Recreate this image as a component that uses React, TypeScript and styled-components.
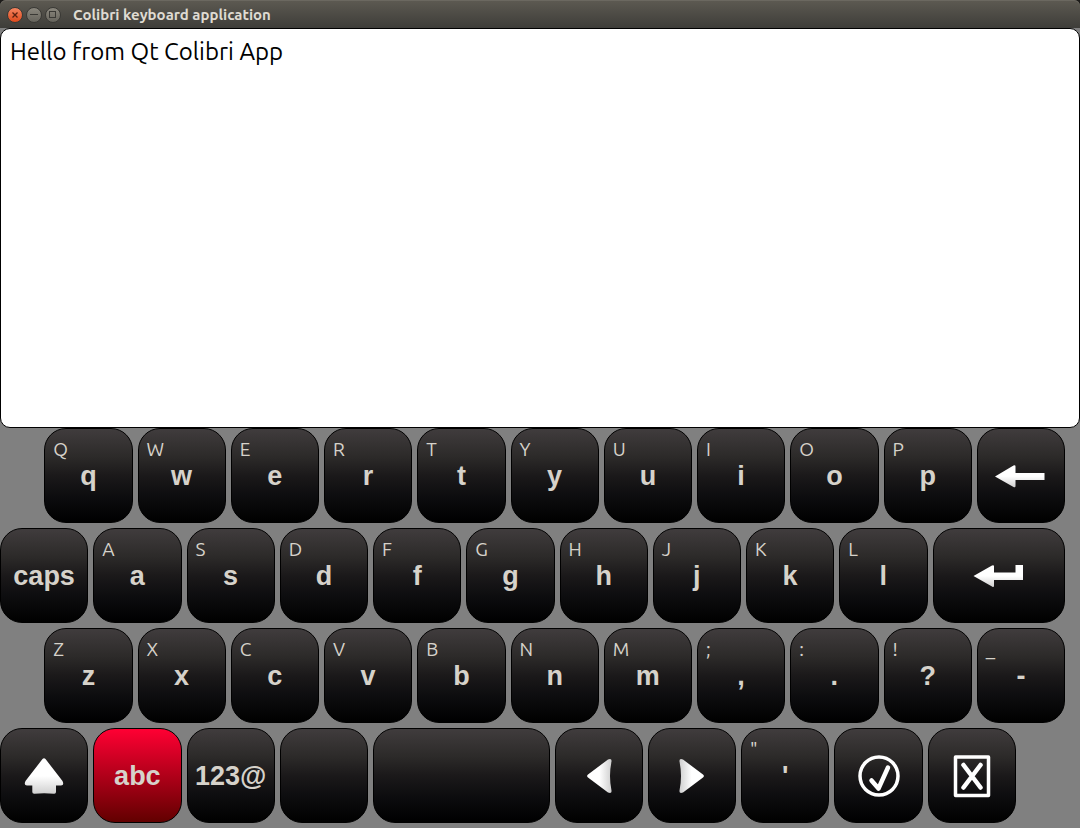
import React, { useRef, useState } from "react";
import styled, { createGlobalStyle, css } from "styled-components";

const GlobalStyle = createGlobalStyle`
  *, *::before, *::after { box-sizing: border-box; }
  body { margin: 0; background: #1c1b19; }
`;

const uiFont = `"Ubuntu", "Noto Sans", sans-serif`;
const keyFont = `"Liberation Sans", Arial, sans-serif`;

const Window = styled.main`
  display: flex;
  flex-direction: column;
  min-height: 100vh;
  font-family: ${uiFont};
`;

const TitleBar = styled.header`
  display: flex;
  align-items: center;
  gap: 3px;
  height: 28px;
  padding: 2px 7px 0;
  border-radius: 6px 6px 0 0;
  background: linear-gradient(#5d5a52, #3e3d39);
  box-shadow: inset 0 1px #6b6860;
`;

const WindowButton = styled.button<{ $close?: boolean }>`
  display: grid;
  place-items: center;
  width: 16px;
  height: 16px;
  padding: 0;
  border: 1px solid #3a3935;
  border-radius: 50%;
  background: ${(p) =>
    p.$close
      ? "linear-gradient(#f58560, #df4a1c)"
      : "linear-gradient(#8a877d, #66645c)"};
  color: ${(p) => (p.$close ? "#5a2110" : "#3a3935")};
`;

const Title = styled.h1`
  margin: 0 0 0 9px;
  color: #dfdbd2;
  font-size: 15px;
  line-height: 20px;
  font-weight: 700;
  white-space: nowrap;
`;

const Body = styled.div`
  display: grid;
  flex: 1;
  grid-template-rows: minmax(120px, 1fr) minmax(300px, 1fr);
  background: #808080;
`;

const Editor = styled.textarea`
  display: block;
  width: 100%;
  height: 100%;
  padding: 7px 9px;
  border: 1px solid #000;
  border-radius: 10px;
  outline: none;
  resize: none;
  background: #fff;
  color: #000;
  font-family: ${uiFont};
  font-size: 24px;
  line-height: 32px;
`;

const Keyboard = styled.section`
  display: flex;
  flex-direction: column;
  gap: 5px;
  padding: 0 15px 5px 0;
`;

const Row = styled.div<{ $staggered?: boolean }>`
  display: flex;
  flex: 1;
  gap: 5px;
  justify-content: ${(p) => (p.$staggered ? "flex-end" : "flex-start")};
`;

/* A full row holds eleven and a half key widths and ten gaps. */
const KeyButton = styled.button<{ $span: number; $active: boolean }>`
  display: grid;
  flex: none;
  width: calc((100% - 50px) * ${(p) => p.$span} / 11.5);
  padding: 0;
  border: 1px solid #000;
  border-radius: 22px;
  background: linear-gradient(#403c3d, #2c2a29 30%, #1b191a 50%, #0d0d0f 72%, #000);
  color: #d6d2ca;
  ${(p) =>
    p.$active &&
    css`
      background: linear-gradient(#ff0033, #620000);
    `}

  > * {
    grid-area: 1 / 1;
    place-self: center;
  }
`;

const KeyLabel = styled.span`
  font-family: ${keyFont};
  font-size: 27px;
  line-height: 32px;
  font-weight: 700;
`;

const KeyHint = styled.span`
  && {
    place-self: start;
  }
  padding: 8px;
  font-family: ${uiFont};
  font-size: 19px;
  line-height: 24px;
`;

const Icon = styled.svg`
  display: block;
  overflow: visible;
`;

const Shade = ({ id, horizontal, flip }: { id: string; horizontal?: boolean; flip?: boolean }) => (
  <defs>
    <linearGradient id={id} x1={flip ? 1 : 0} y1="0" x2={horizontal ? (flip ? 0 : 1) : 0} y2={horizontal ? 0 : 1}>
      <stop offset="0.5" stopColor="#fff" />
      <stop offset="1" stopColor="#cfcfcf" />
    </linearGradient>
  </defs>
);

const icons: Record<string, React.ReactNode> = {
  Backspace: (
    <Icon width="52" height="24" viewBox="0 0 52 24">
      <Shade id="back" />
      <path d="M0 12.500 L18.500 1.500 Q20.500 .5 20.500 2.500 V9 H49.500 V16 H20.500 V22 Q20.500 24 18.500 23 Z" fill="url(#back)" />
    </Icon>
  ),
  Enter: (
    <Icon width="52" height="24" viewBox="0 0 52 24">
      <Shade id="enter" />
      <path d="M.5 12 L19 1.500 Q21 .5 21 2.500 V8.500 H42.500 V1 H50 V16 H21 V21.500 Q21 24 19 22.500 Z" fill="url(#enter)" />
    </Icon>
  ),
  Shift: (
    <Icon width="40" height="36" viewBox="0 0 40 36">
      <Shade id="shift" />
      <path d="M18.500 1 Q20 -.3 21.500 1 L38.500 23 Q40.500 27.500 37 27.500 H32 V34 Q32 36 30 35.800 Q20 34.500 10.500 35.800 Q8.300 36 8.300 34 V27.500 H3 Q-.5 27.500 1.500 23 Z" fill="url(#shift)" />
    </Icon>
  ),
  "Cursor left": (
    <Icon width="24" height="36" viewBox="0 0 24 36">
      <Shade id="left" horizontal />
      <path d="M1 16.500 L21 1.500 Q25 0 24.500 3.500 Q21.500 18 24.500 32.500 Q25 36 21 34.500 L1 19.500 Q-.8 18 1 16.500 Z" fill="url(#left)" />
    </Icon>
  ),
  "Cursor right": (
    <Icon width="25" height="36" viewBox="0 0 25 36">
      <Shade id="right" horizontal flip />
      <path d="M24 16.500 L4 1.500 Q0 0 .5 3.500 Q3.500 18 .5 32.500 Q0 36 4 34.500 L24 19.500 Q25.800 18 24 16.500 Z" fill="url(#right)" />
    </Icon>
  ),
  Accept: (
    <Icon width="42" height="42" viewBox="0 0 42 42" fill="none" stroke="#fff" strokeLinecap="round" strokeLinejoin="round">
      <circle cx="22" cy="21" r="19" strokeWidth="3.500" />
      <path d="M14.500 25.500 L21.500 33.500 L31 12.500" strokeWidth="4.500" />
    </Icon>
  ),
  Close: (
    <Icon width="36" height="42" viewBox="0 0 36 42" fill="none" stroke="#fff" strokeLinejoin="round">
      <rect x="1.500" y="2" width="33" height="38.500" strokeWidth="3.500" />
      <path d="M9.500 10 L26.500 32.500 M26.500 10 L9.500 32.500" strokeWidth="4.500" strokeLinecap="round" />
    </Icon>
  ),
};

type KeyDef = {
  name?: string;
  label?: string;
  hint?: string;
  span?: number;
};

const pairs = (lower: string, upper: string): KeyDef[] =>
  [...lower].map((label, i) => ({ label, hint: upper[i] }));

const rows: { staggered?: boolean; keys: KeyDef[] }[] = [
  { staggered: true, keys: [...pairs("qwertyuiop", "QWERTYUIOP"), { name: "Backspace" }] },
  { keys: [{ label: "caps" }, ...pairs("asdfghjkl", "ASDFGHJKL"), { name: "Enter", span: 1.5 }] },
  { staggered: true, keys: pairs("zxcvbnm,.?-", "ZXCVBNM;:!_") },
  {
    keys: [
      { name: "Shift" },
      { label: "abc" },
      { label: "123@" },
      { name: "Blank" },
      { name: "Space", span: 2 },
      { name: "Cursor left" },
      { name: "Cursor right" },
      { label: "'", hint: '"' },
      { name: "Accept" },
      { name: "Close" },
    ],
  },
];

export default function App() {
  const [text, setText] = useState("Hello from Qt Colibri App");
  const [mode, setMode] = useState("abc");
  const editor = useRef<HTMLTextAreaElement>(null);

  const press = (key: KeyDef) => {
    if (key.label === "abc" || key.label === "123@") setMode(key.label);
    else if (key.label && key.label.length === 1) setText((t) => t + key.label);
    else if (key.name === "Space") setText((t) => t + " ");
    else if (key.name === "Enter") setText((t) => t + "\n");
    else if (key.name === "Backspace") setText((t) => t.slice(0, -1));
    editor.current?.focus();
  };

  return (
    <Window>
      <GlobalStyle />
      <TitleBar>
        <WindowButton type="button" aria-label="Close window" $close>
          <svg width="6" height="6" viewBox="0 0 6 6" stroke="currentColor" strokeWidth="1.300">
            <path d="M.5 .5 L5.500 5.500 M5.500 .5 L.5 5.500" />
          </svg>
        </WindowButton>
        <WindowButton type="button" aria-label="Minimize window">
          <svg width="8" height="8" viewBox="0 0 8 8" stroke="currentColor">
            <path d="M0 3.500 H8" />
          </svg>
        </WindowButton>
        <WindowButton type="button" aria-label="Maximize window">
          <svg width="8" height="8" viewBox="0 0 8 8" fill="none" stroke="currentColor">
            <rect x=".5" y=".5" width="6" height="6" />
          </svg>
        </WindowButton>
        <Title>Colibri keyboard application</Title>
      </TitleBar>
      <Body>
        <Editor
          ref={editor}
          aria-label="Text"
          spellCheck={false}
          value={text}
          onChange={(e) => setText(e.target.value)}
        />
        <Keyboard aria-label="Keyboard">
          {rows.map((row, r) => (
            <Row key={r} $staggered={row.staggered}>
              {row.keys.map((key) => (
                <KeyButton
                  key={key.name ?? key.label}
                  type="button"
                  aria-label={key.name ?? key.label}
                  $span={key.span ?? 1}
                  $active={key.label === mode}
                  onClick={() => press(key)}
                >
                  {key.hint && <KeyHint>{key.hint}</KeyHint>}
                  {key.label && <KeyLabel>{key.label}</KeyLabel>}
                  {key.name && icons[key.name]}
                </KeyButton>
              ))}
            </Row>
          ))}
        </Keyboard>
      </Body>
    </Window>
  );
}
